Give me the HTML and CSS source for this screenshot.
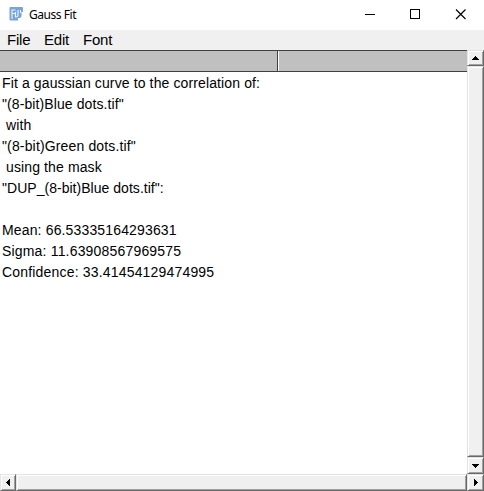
FILE: index.html
```
<!DOCTYPE html>
<html lang="en"><head><meta charset="utf-8"><title>Gauss Fit</title><link rel="stylesheet" href="styles.css"></head>
<body>
<div class="window">
<header class="titlebar">
<svg class="logo" width="15" height="15" viewBox="0 0 15 15"><path d="M1 0h12q1 0 1 1v4h-1.500v4q0 2-2 2H9v2.500H1.500q-1 0-1-1V1z" fill="#76a5d6"/><path d="M3 12V3h3.500M3.500 6.500h2.500M6.500 5v5.500M9 3v5.500q0 1.500-2 1.500M11.500 3v3" fill="none" stroke="#edf5fd" stroke-width="1.100"/></svg>
<span class="title">Gauss Fit</span>
<svg class="controls" width="120" height="30" viewBox="0 0 120 30"><g fill="none" stroke="#000"><path d="M1 14.500h10M46.500 9.500h9v9h-9z" shape-rendering="crispEdges"/><path d="M92 9.500l9.500 9.500M101.500 9.500L92 19" stroke-width="1.150"/></g></svg>
</header>
<nav class="menu"><span class="file">File</span><span class="edit">Edit</span><span class="font">Font</span></nav>
<div class="body">
<main class="panel">
<div class="columns"><div class="col first"></div><div class="col"></div></div>
<div class="text"><div><span class="l1">Fit a gaussian curve to the correlation of:</span></div><div><span class="l2">"(8-bit)Blue dots.tif"</span></div><div><span class="l3"> with</span></div><div><span class="l4">"(8-bit)Green dots.tif"</span></div><div><span class="l5"> using the mask</span></div><div><span class="l6">"DUP_(8-bit)Blue dots.tif":</span></div><div></div><div><span class="l8">Mean: 66.53335164293631</span></div><div><span class="l9">Sigma: 11.63908567969575</span></div><div><span class="l10">Confidence: 33.41454129474995</span></div></div>
</main>
<div class="vbar"><div class="btn up"><svg width="9" height="5" viewBox="0 0 9 5" shape-rendering="crispEdges"><path d="M4 0h1v1h1v1h1v1h1v1H1V3h1V2h1V1h1z"/></svg></div><div class="thumb"></div><div class="btn"><svg width="9" height="5" viewBox="0 0 9 5" shape-rendering="crispEdges"><path d="M1 1h7v1H7v1H6v1H5v1H4V4H3V3H2V2H1z"/></svg></div></div>
</div>
<div class="hbar"><div class="btn left"><svg width="5" height="9" viewBox="0 0 5 9" shape-rendering="crispEdges"><path d="M4 1v7H3V7H2V6H1V5H0V4h1V3h1V2h1V1z"/></svg></div><div class="thumb"></div><div class="btn"><svg width="5" height="9" viewBox="0 0 5 9" shape-rendering="crispEdges"><path d="M1 1v7h1V7h1V6h1V5h1V4H4V3H3V2H2V1z"/></svg></div></div>
</div>
</body></html>
```
FILE: styles.css
```
* { box-sizing: border-box; }
body { margin: 0; background: #fff; overflow: hidden; color: #000; font-family: "Liberation Sans", Arial, sans-serif; }
.window { width: 484px; height: 491px; display: flex; flex-direction: column; }
.titlebar { height: 30px; flex: none; display: flex; align-items: center; padding-left: 9px; }
.logo { margin-top: -1px; }
.title { font: 12px/16px "Noto Sans", sans-serif; margin-left: 5px; letter-spacing: -.45px; }
.controls { margin-left: auto; margin-right: 0; }
.menu { height: 20px; flex: none; background: #f0f0f0; display: flex; padding-left: 7px; font-size: 15px; line-height: 20px; letter-spacing: -.2px; }
.file { width: 37px; }
.edit { width: 39px; }
.body { height: 424px; flex: none; display: flex; }
.panel { width: 467px; }
.columns { height: 22px; display: flex; background: #c0c0c0; border: solid #404040; border-width: 1px 0; }
.first { width: 279px; border-right: 1px solid #fff; box-shadow: inset -1px 0 #404040; }
.text { padding: 1px 0 0 2px; font-size: 14px; white-space: pre; }
.text > div { height: 21px; line-height: 21px; }
.l1, .l3, .l5, .l6 { letter-spacing: .12px; }
.l6 { letter-spacing: .03px; }
.l2 { letter-spacing: .1px; }
.l4 { letter-spacing: .15px; }
.l8 { letter-spacing: .15px; }
.l9, .l10 { letter-spacing: .18px; }
.vbar { width: 17px; display: flex; flex-direction: column; }
.hbar { width: 484px; height: 17px; flex: none; display: flex; }
.btn, .thumb { background: #f0f0f0; border: 1px solid; border-color: #e3e3e3 #696969 #696969 #e3e3e3; box-shadow: inset 1px 1px #fff, inset -1px -1px #a0a0a0; }
.btn { width: 17px; height: 17px; flex: none; display: flex; align-items: center; justify-content: center; }
.left { width: 16px; }
.up { height: 16px; }
.thumb { flex: 1; }
```
